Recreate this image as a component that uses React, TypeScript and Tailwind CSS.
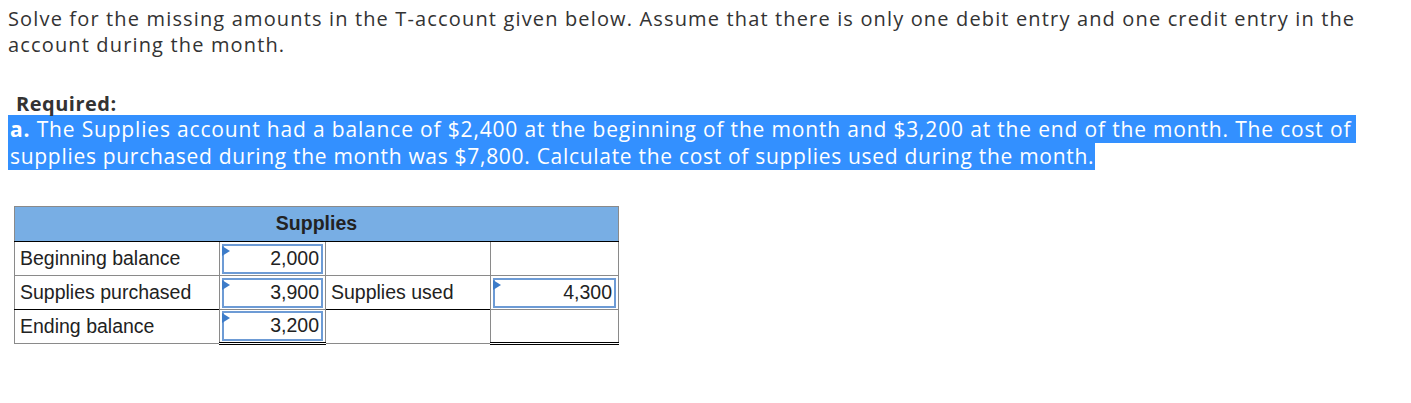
import type { FC } from 'react';

type Row = {
  label: string;
  debit: string;
  creditLabel?: string;
  credit?: string;
};

const rows: Row[] = [
  { label: 'Beginning balance', debit: '2,000' },
  { label: 'Supplies purchased', debit: '3,900', creditLabel: 'Supplies used', credit: '4,300' },
  { label: 'Ending balance', debit: '3,200' },
];

const AmountBox: FC<{ value: string }> = ({ value }) => (
  <div className="relative mx-[2px] flex h-[30px] items-center justify-end border-2 border-[#6d9bd5] pr-[2px]">
    <span className="absolute -left-[2px] top-0 h-0 w-0 border-y-[5px] border-l-[8px] border-y-transparent border-l-[#3d7cc9]" />
    {value}
  </div>
);

const App: FC = () => (
  <div className="h-[403px] w-[1411px] bg-white text-[#333]" style={{ fontFamily: '"Open Sans", sans-serif' }}>
    <p className="px-[8px] pt-[6px] text-[20px] leading-[26px] tracking-[1.15px]">
      Solve for the missing amounts in the T-account given below. Assume that there is only one debit entry and one
      credit entry in the
      <br />
      account during the month.
    </p>
    <div className="mt-[35px] pl-[16px] text-[20px] font-bold leading-[22px] tracking-[0.5px]">Required:</div>
    <div className="px-[8px] text-[21px] text-white">
      <div className="w-fit bg-[#3390ff] pl-[2px] pr-[5px] leading-[28px] tracking-[0.83px]">
        <b>a.</b> The Supplies account had a balance of $2,400 at the beginning of the month and $3,200 at the end of the
        month. The cost of
      </div>
      <div className="w-fit bg-[#3390ff] pl-[2px] pr-[1px] leading-[27px] tracking-[0.7px]">
        supplies purchased during the month was $7,800. Calculate the cost of supplies used during the month.
      </div>
    </div>

    <table
      className="ml-[14px] mt-[36px] border-collapse text-[19.5px] text-[#222]"
      style={{ fontFamily: '"Liberation Sans", Arial, sans-serif' }}
    >
      <colgroup>
        <col className="w-[205px]" />
        <col className="w-[106px]" />
        <col className="w-[165px]" />
        <col className="w-[128px]" />
      </colgroup>
      <thead>
        <tr className="h-[35px] bg-[#78aee4]">
          <th colSpan={4} className="border border-[#8a8a8a] border-b-black text-center font-bold">
            Supplies
          </th>
        </tr>
      </thead>
      <tbody>
        {rows.map((row, i) => {
          const last = i === rows.length - 1;
          const bottom = i === 1 ? 'border-b-black' : 'border-b-[#8a8a8a]';
          return (
            <tr key={row.label} className="h-[34px]">
              <td className={`border border-[#8a8a8a] px-[5px] ${bottom}`}>{row.label}</td>
              <td className={`border border-[#8a8a8a] p-0 ${last ? 'border-b-[3px] border-b-black border-double' : bottom}`}>
                <AmountBox value={row.debit} />
              </td>
              <td className={`border border-[#8a8a8a] px-[5px] ${bottom}`}>{row.creditLabel ?? ''}</td>
              <td className={`border border-[#8a8a8a] p-0 ${last ? 'border-b-[3px] border-b-black border-double' : bottom}`}>
                {row.credit ? <AmountBox value={row.credit} /> : null}
              </td>
            </tr>
          );
        })}
      </tbody>
    </table>
  </div>
);

export default App;
